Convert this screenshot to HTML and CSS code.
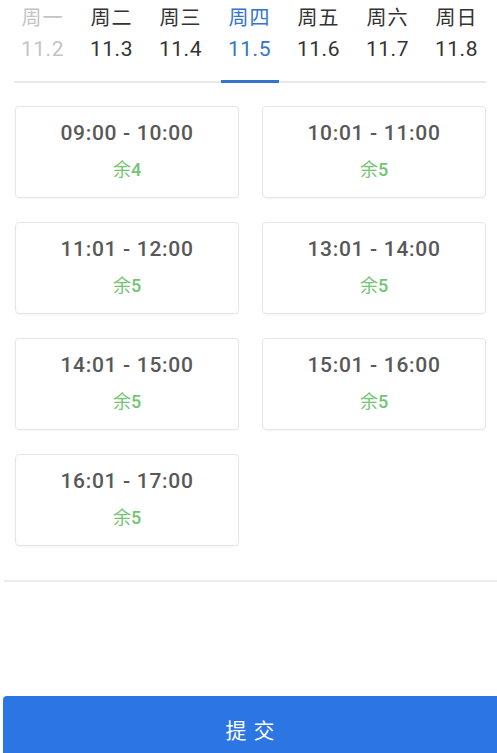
FILE: index.html
```html
<!DOCTYPE html>
<html lang="zh">
<head>
<meta charset="utf-8">
<title>预约时段</title>
<link rel="stylesheet" href="styles.css">
</head>
<body>
<div class="page">
  <header class="week">
    <div class="tabs">
      <div class="tab past"><div class="day">周一</div><div class="date">11.2</div></div>
      <div class="tab"><div class="day">周二</div><div class="date">11.3</div></div>
      <div class="tab"><div class="day">周三</div><div class="date">11.4</div></div>
      <div class="tab active"><div class="day">周四</div><div class="date">11.5</div></div>
      <div class="tab"><div class="day">周五</div><div class="date">11.6</div></div>
      <div class="tab"><div class="day">周六</div><div class="date">11.7</div></div>
      <div class="tab"><div class="day">周日</div><div class="date">11.8</div></div>
    </div>
    <div class="tabs-line"></div>
  </header>

  <main class="slots">
    <div class="slot"><div class="time">09:00 - 10:00</div><div class="left">余<span class="num">4</span></div></div>
    <div class="slot"><div class="time">10:01 - 11:00</div><div class="left">余<span class="num">5</span></div></div>
    <div class="slot"><div class="time">11:01 - 12:00</div><div class="left">余<span class="num">5</span></div></div>
    <div class="slot"><div class="time">13:01 - 14:00</div><div class="left">余<span class="num">5</span></div></div>
    <div class="slot"><div class="time">14:01 - 15:00</div><div class="left">余<span class="num">5</span></div></div>
    <div class="slot"><div class="time">15:01 - 16:00</div><div class="left">余<span class="num">5</span></div></div>
    <div class="slot"><div class="time">16:01 - 17:00</div><div class="left">余<span class="num">5</span></div></div>
  </main>

  <div class="sep"></div>

  <button class="submit" type="button">提交</button>
</div>
</body>
</html>
```

FILE: styles.css
```css
html, body {
  margin: 0;
  padding: 0;
  background: #ffffff;
}
body {
  font-family: Roboto, "Noto Sans CJK SC", sans-serif;
  color: #333333;
}
.page {
  display: flex;
  flex-direction: column;
  min-height: 753px;
  overflow: hidden;
}

/* week tabs */
.week {
  display: flex;
  flex-direction: column;
}
.tabs {
  display: grid;
  grid-template-columns: repeat(7, 69px);
  padding-left: 8px;
  height: 80px;
  box-sizing: border-box;
  padding-top: 3px;
}
.tab {
  position: relative;
  text-align: center;
  color: #333333;
}
.day {
  font-family: "Noto Sans CJK SC", sans-serif;
  font-size: 20px;
  line-height: 28px;
  letter-spacing: 1px;
}
.date {
  font-size: 21px;
  line-height: 28px;
  margin-top: 4px;
  letter-spacing: 0.5px;
}
.tab.past {
  color: #c4c4c4;
}
.tab.active {
  color: #3474cc;
}
.tab.active::after {
  content: "";
  position: absolute;
  left: 50%;
  bottom: -3px;
  width: 58px;
  height: 3px;
  margin-left: -29px;
  background: #3474cc;
  z-index: 1;
}
.tabs-line {
  height: 2px;
  margin: 1px 11px 0 14px;
  background: #e9e9e9;
}

/* slots */
.slots {
  display: grid;
  grid-template-columns: 224px 224px;
  column-gap: 23px;
  row-gap: 24px;
  padding-left: 15px;
  margin-top: 23px;
}
.slot {
  height: 92px;
  box-sizing: border-box;
  border: 1px solid #e6e6e6;
  border-radius: 4px;
  box-shadow: 0 1px 2px rgba(0, 0, 0, 0.04);
  text-align: center;
  padding-top: 12px;
}
.time {
  font-size: 21px;
  line-height: 28px;
  font-weight: 500;
  color: #585858;
  letter-spacing: 0.7px;
}
.left {
  font-family: "Noto Sans CJK SC", sans-serif;
  font-size: 18px;
  line-height: 24px;
  margin-top: 9px;
  color: #74c474;
  font-weight: 400;
}
.num {
  font-family: Roboto, sans-serif;
  font-weight: 500;
}

.sep {
  height: 2px;
  margin: 34px 0 0 4px;
  background: #ebebeb;
}

.submit {
  margin: 114px 0 0 3px;
  height: 57px;
  border: none;
  border-radius: 4px 0 0 0;
  background: #2b76e2;
  color: #ffffff;
  font-family: "Noto Sans CJK SC", sans-serif;
  font-size: 21px;
  letter-spacing: 7px;
  padding: 8px 0 0 7px;
  box-sizing: border-box;
  display: flex;
  align-items: center;
  justify-content: center;
}
```
